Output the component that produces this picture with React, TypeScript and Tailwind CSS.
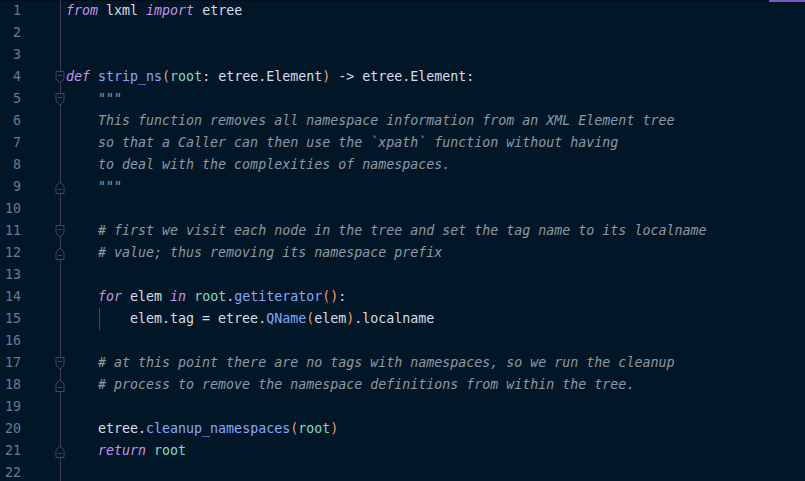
import React from "react";

type Seg = [string, string];

const K = "text-[#c792ea] italic";
const T = "text-[#d6deeb]";
const F = "text-[#82aaff]";
const P = "text-[#f39c6b]";
const V = "text-[#7fdbca]";
const C = "text-[#8b9aa3] italic";

const lines: Seg[][] = [
  [["from", K], [" lxml ", T], ["import", K], [" etree", T]],
  [],
  [],
  [["def", K], [" ", T], ["strip_ns", F], ["(", P], ["root", V], [": etree.Element", T], [")", P], [" -> etree.Element:", T]],
  [["    \"\"\"", C]],
  [["    This function removes all namespace information from an XML Element tree", C]],
  [["    so that a Caller can then use the `xpath` function without having", C]],
  [["    to deal with the complexities of namespaces.", C]],
  [["    \"\"\"", C]],
  [],
  [["    # first we visit each node in the tree and set the tag name to its localname", C]],
  [["    # value; thus removing its namespace prefix", C]],
  [],
  [["    ", T], ["for", K], [" elem ", T], ["in", K], [" ", T], ["root", V], [".", T], ["getiterator", F], ["()", P], [":", T]],
  [["        elem.tag = etree.", T], ["QName", F], ["(", P], ["elem", T], [")", P], [".localname", T]],
  [],
  [["    # at this point there are no tags with namespaces, so we run the cleanup", C]],
  [["    # process to remove the namespace definitions from within the tree.", C]],
  [],
  [["    etree.", T], ["cleanup_namespaces", F], ["(", P], ["root", V], [")", P]],
  [["    ", T], ["return", K], [" ", T], ["root", V]],
  [],
];

const foldStart = new Set([4, 5, 11, 17]);
const foldEnd = new Set([9, 12, 18, 21]);

function FoldMarker({ up }: { up: boolean }) {
  return (
    <svg
      width="10"
      height="13"
      viewBox="0 0 10 13"
      className="absolute left-0 top-[5px]"
    >
      {up ? (
        <path d="M1 12.5 V5 L5 1 L9 5 V12.5 Z" fill="#011627" stroke="#45436b" strokeWidth="1" />
      ) : (
        <path d="M1 0.5 V8 L5 12 L9 8 V0.5 Z" fill="#011627" stroke="#45436b" strokeWidth="1" />
      )}
      <line x1="3" x2="7" y1={up ? 8.5 : 4.5} y2={up ? 8.5 : 4.5} stroke="#45436b" strokeWidth="1" />
    </svg>
  );
}

export default function App() {
  return (
    <div
      className="relative w-[805px] h-[481px] overflow-hidden bg-[#011627]"
      style={{ fontFamily: '"DejaVu Sans Mono", "Liberation Mono", monospace' }}
    >
      <div className="absolute left-0 top-0 w-full h-[1px] bg-[#000e1a]" />
      <div className="absolute right-0 top-0 w-[36px] h-[2px] bg-[#7e57c2]" />
      <div className="flex flex-col">
        {lines.map((segs, i) => {
          const n = i + 1;
          return (
            <div key={n} className="flex h-[22px] items-center text-[13.3px] leading-[22px]">
              <div className="w-[21px] text-right text-[#5f7e97] shrink-0">{n}</div>
              <div className="w-[34px] shrink-0" />
              <div className="relative w-[10px] h-[22px] shrink-0">
                <div className="absolute left-[5px] top-0 w-[1px] h-full bg-[#3b3a5e]" />
                {foldStart.has(n) && <FoldMarker up={false} />}
                {foldEnd.has(n) && <FoldMarker up={true} />}
              </div>
              <div className="relative pl-[1px] whitespace-pre">
                {n === 15 && (
                  <div className="absolute left-[34px] top-0 w-[1px] h-[22px] bg-[#1a5a94]" />
                )}
                {segs.map(([t, c], j) => (
                  <span key={j} className={c}>
                    {t}
                  </span>
                ))}
              </div>
            </div>
          );
        })}
      </div>
    </div>
  );
}
